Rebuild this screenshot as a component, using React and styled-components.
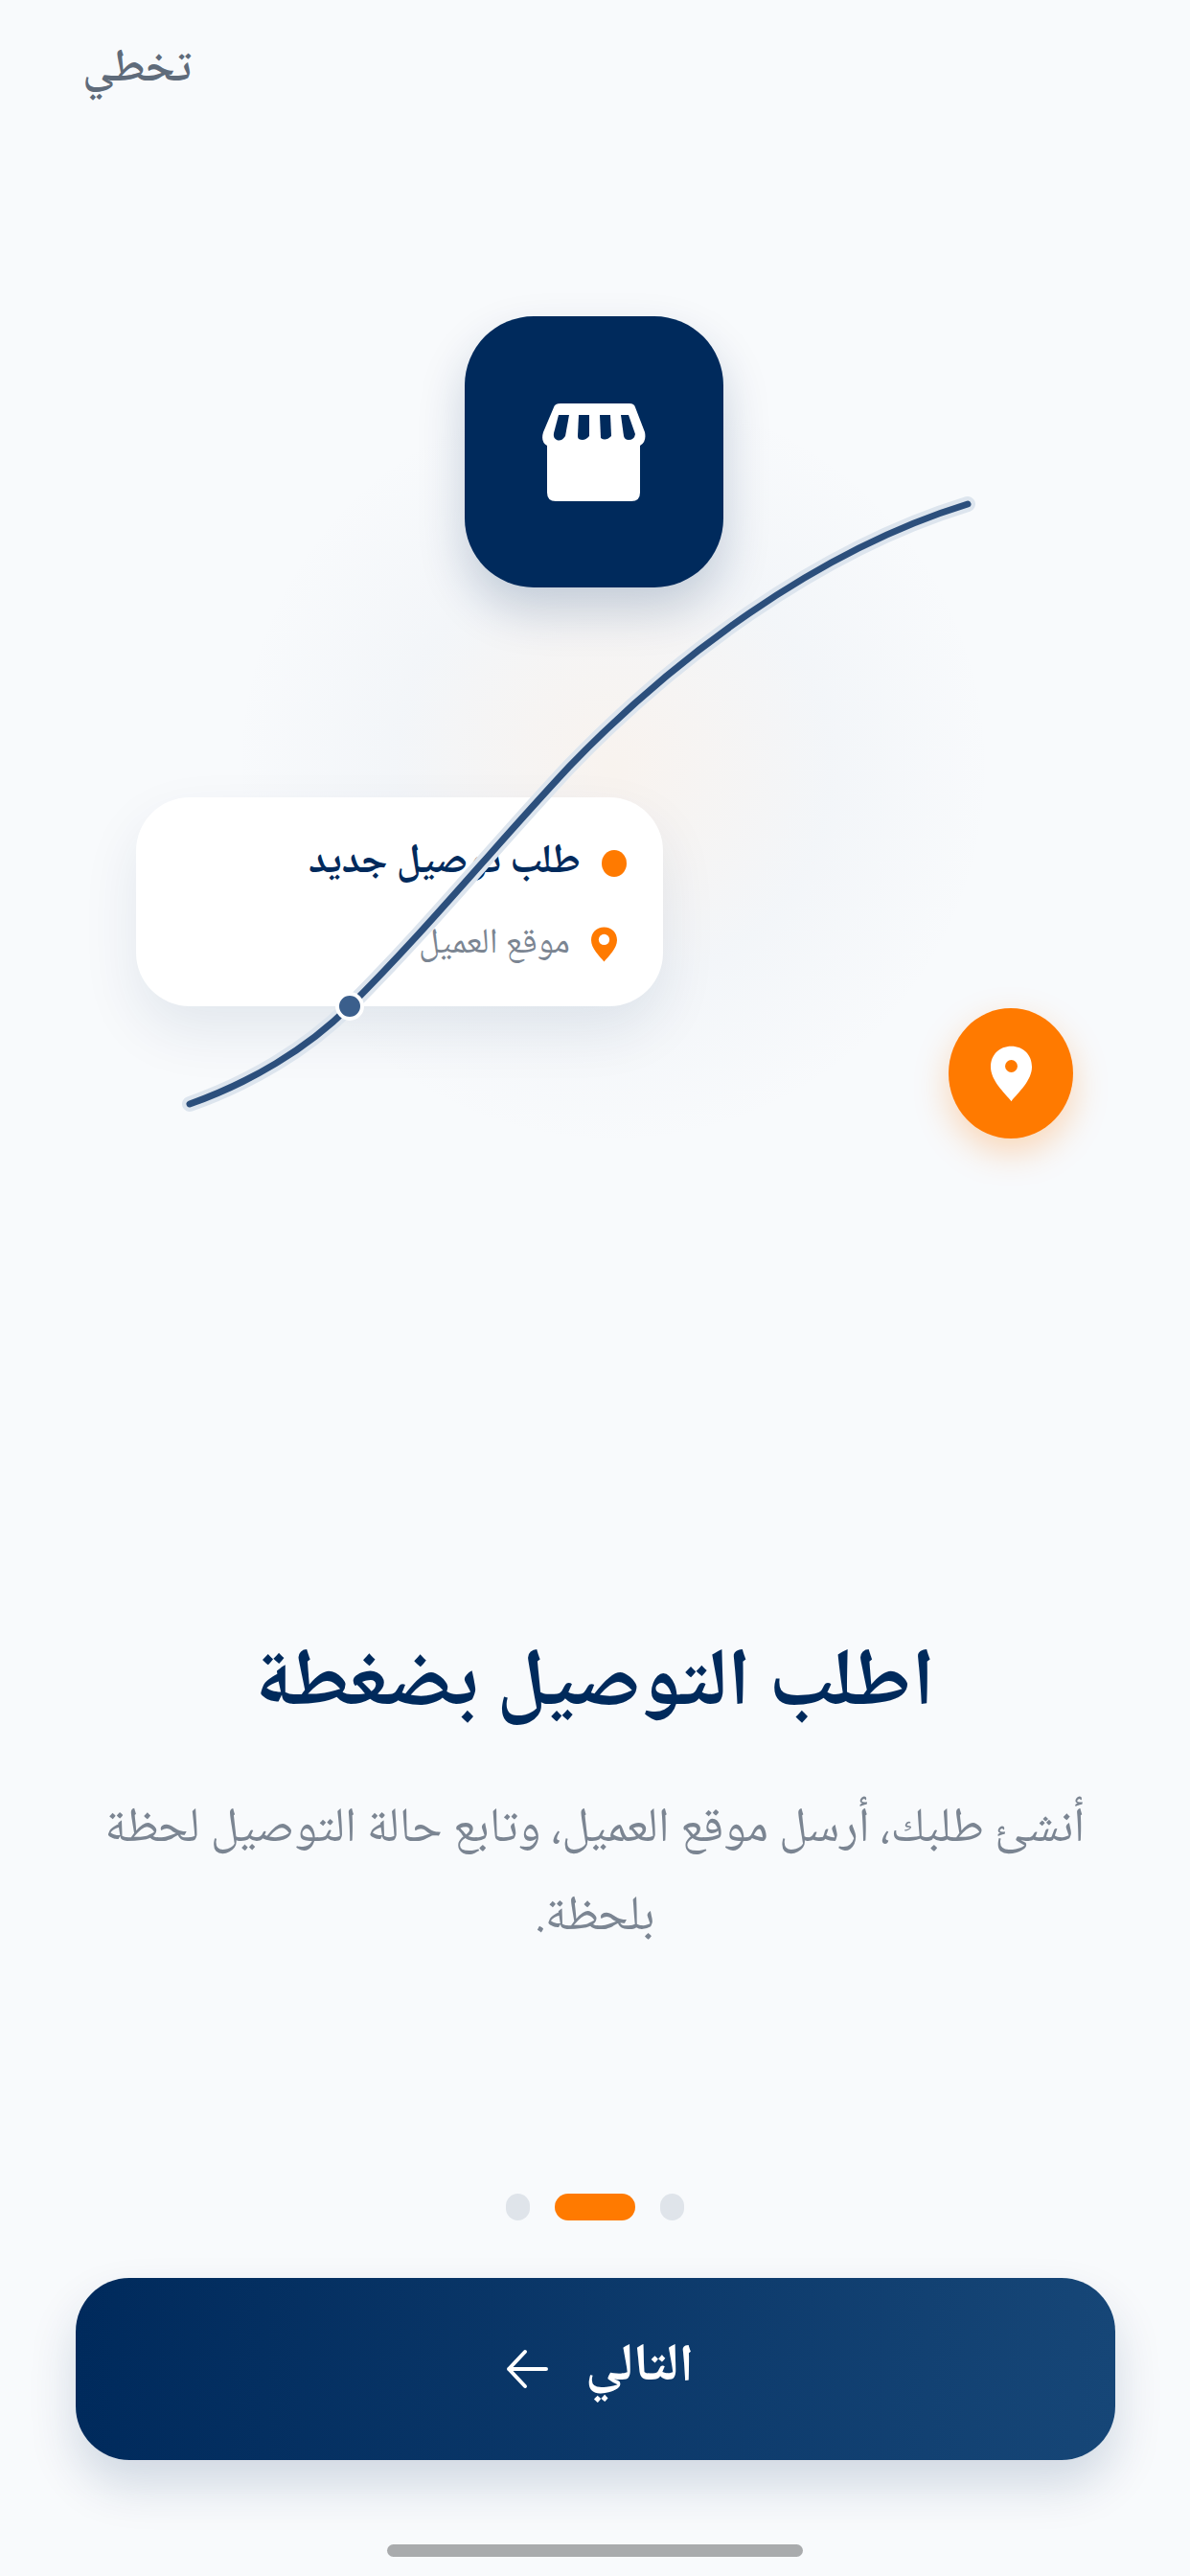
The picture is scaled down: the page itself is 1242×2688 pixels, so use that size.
import styled, { createGlobalStyle } from 'styled-components';

const GlobalStyle = createGlobalStyle`
    html, body {
        margin: 0;
        padding: 0;
        background: #f8fafc;
    }
`;

const Page = styled.div`
    width: 1242px;
    height: 2688px;
    display: flex;
    flex-direction: column;
    align-items: center;
    background: #f8fafc;
    font-family: "Noto Naskh Arabic", "Noto Sans Arabic", "DejaVu Sans", sans-serif;
    overflow: hidden;
`;

const TopBar = styled.div`
    width: 100%;
    height: 120px;
    flex: none;
    box-sizing: border-box;
    padding: 46px 0 0 86px;
`;

const Skip = styled.span`
    font-size: 48px;
    line-height: 56px;
    color: #5f6b7a;
    font-weight: 600;
`;

// illustration canvas, everything inside is placed freely
const Hero = styled.div`
    position: relative;
    width: 100%;
    height: 1586px;
    flex: none;
`;

const Glow = styled.div`
    position: absolute;
    left: 240px;
    top: 280px;
    width: 800px;
    height: 800px;
    border-radius: 50%;
    background: radial-gradient(circle, rgba(255, 150, 60, 0.07) 0%, rgba(120, 140, 170, 0.04) 40%, rgba(248, 250, 252, 0) 70%);
`;

const StoreTile = styled.div`
    position: absolute;
    left: 485px;
    top: 210px;
    width: 270px;
    height: 283px;
    border-radius: 72px;
    background: #002a5c;
    display: flex;
    align-items: center;
    justify-content: center;
    box-shadow: 0 24px 50px rgba(0, 42, 92, 0.2);
`;

const OrderCard = styled.div`
    position: absolute;
    left: 142px;
    top: 712px;
    width: 550px;
    height: 218px;
    box-sizing: border-box;
    padding: 47px 38px 0 0;
    border-radius: 56px;
    background: #fff;
    display: flex;
    flex-direction: column;
    gap: 40px;
    box-shadow: 0 26px 60px rgba(0, 42, 92, 0.09);
`;

const CardRow = styled.div`
    display: flex;
    align-items: center;
    gap: 22px;
    height: 44px;
    margin-right: ${(p) => p.$inset || 0}px;
`;

const OrangeDot = styled.span`
    width: 26px;
    height: 28px;
    border-radius: 50%;
    background: #ff7a00;
    flex: none;
`;

const CardTitle = styled.span`
    font-size: 42px;
    font-weight: 700;
    color: #002a5c;
`;

const CardSub = styled.span`
    font-size: 37px;
    color: #7b8592;
`;

const Route = styled.svg`
    position: absolute;
    left: 0;
    top: -120px;
    width: 1242px;
    height: 1400px;
    pointer-events: none;
`;

const PinBadge = styled.div`
    position: absolute;
    left: 990px;
    top: 932px;
    width: 130px;
    height: 136px;
    border-radius: 50%;
    background: #ff7a00;
    display: flex;
    align-items: center;
    justify-content: center;
    box-shadow: 0 14px 36px rgba(255, 122, 0, 0.28);
`;

const Title = styled.h1`
    margin: 0;
    height: 110px;
    font-size: 85px;
    line-height: 110px;
    font-weight: 700;
    color: #002a5c;
    text-align: center;
    flex: none;
`;

const Body = styled.p`
    margin: 48px 0 0;
    width: 1080px;
    font-size: 50.5px;
    line-height: 92px;
    color: #7b8592;
    text-align: center;
    flex: none;
`;

const Dots = styled.div`
    display: flex;
    gap: 26px;
    align-items: center;
    margin-top: auto;
`;

const Dot = styled.span`
    height: 28px;
    width: ${(p) => (p.$active ? 84 : 25)}px;
    border-radius: 14px;
    background: ${(p) => (p.$active ? '#ff7a00' : '#dfe4ea')};
`;

const NextButton = styled.button`
    margin-top: 60px;
    width: 1085px;
    height: 190px;
    flex: none;
    box-sizing: border-box;
    padding: 0 0 0 10px;
    border: 0;
    border-radius: 56px;
    background: linear-gradient(90deg, #002a5c 0%, #164677 100%);
    color: #fff;
    font-family: inherit;
    font-size: 55px;
    font-weight: 700;
    display: flex;
    align-items: center;
    justify-content: center;
    gap: 39px;
    box-shadow: 0 26px 50px rgba(0, 42, 92, 0.16);
`;

const HomeBar = styled.div`
    margin: 88px 0 20px;
    width: 434px;
    height: 13px;
    border-radius: 7px;
    background: #a9abad;
    flex: none;
`;

function StoreIcon() {
    return (
        <svg width="108" height="104" viewBox="0 0 108 104">
            <path fill="#fff" d="M12 5 Q13 1 19 1 H91 Q96 1 97 5 L107 31 Q109 41 102 45 V94 Q102 103 93 103 H14 Q5 103 5 94 V45 Q-2 41 1 31 Z" />
            <g fill="#002a5c">
                <path d="M17 13 H28 L24 35 Q20 41 15 39 Q11 37 12 32 Z" />
                <path d="M38 13 H49 V35 Q44 41 38 38 Q37 37 37 35 Z" />
                <path d="M60 13 H71 L72 35 Q66 41 61 37 Z" />
                <path d="M82 13 H90 L97 33 Q96 39 90 39 Q86 39 85 35 Z" />
            </g>
        </svg>
    );
}

function Pin({ width, height, color, hole, holeSize }) {
    return (
        <svg width={width} height={height} viewBox="0 0 24 32">
            <path fill={color} d="M12 0 C5 0 0 5 0 12 C0 20 8 27 12 32 C16 27 24 20 24 12 C24 5 19 0 12 0 Z" />
            <circle cx="12" cy="11.5" r={holeSize} fill={hole} />
        </svg>
    );
}

const ROUTE = 'M198 1152 C260 1130 320 1095 365 1050 C450 965 510 890 594 800 C700 690 850 575 1010 526';

export default function App() {
    return (
        <Page dir="rtl">
            <GlobalStyle />
            <TopBar dir="ltr">
                <Skip dir="rtl">تخطي</Skip>
            </TopBar>
            <Hero dir="ltr">
                <Glow />
                <StoreTile>
                    <StoreIcon />
                </StoreTile>
                <OrderCard dir="rtl">
                    <CardRow>
                        <OrangeDot />
                        <CardTitle>طلب توصيل جديد</CardTitle>
                    </CardRow>
                    <CardRow $inset={10}>
                        <Pin width={27} height={39} color="#ff7a00" hole="#fff" holeSize={5} />
                        <CardSub>موقع العميل</CardSub>
                    </CardRow>
                </OrderCard>
                <Route viewBox="0 0 1242 1400">
                    <g fill="none" strokeLinecap="round">
                        <path d={ROUTE} stroke="#dde5ee" strokeWidth="16" />
                        <path d={ROUTE} stroke="#2c4f7c" strokeWidth="7" />
                    </g>
                    <circle cx="365" cy="1050" r="13" fill="#3b5f8c" stroke="#fff" strokeWidth="4" />
                </Route>
                <PinBadge>
                    <Pin width={43} height={61} color="#fff" hole="#ff7a00" holeSize={3.6} />
                </PinBadge>
            </Hero>
            <Title>اطلب التوصيل بضغطة</Title>
            <Body>أنشئ طلبك، أرسل موقع العميل، وتابع حالة التوصيل لحظة بلحظة.</Body>
            <Dots>
                <Dot />
                <Dot $active />
                <Dot />
            </Dots>
            <NextButton>
                التالي
                <svg width="44" height="44" viewBox="0 0 44 44" fill="none" stroke="#fff" strokeWidth="4" strokeLinecap="round" strokeLinejoin="round">
                    <path d="M42 22 H3 M20 4 L3 22 L20 40" />
                </svg>
            </NextButton>
            <HomeBar />
        </Page>
    );
}
